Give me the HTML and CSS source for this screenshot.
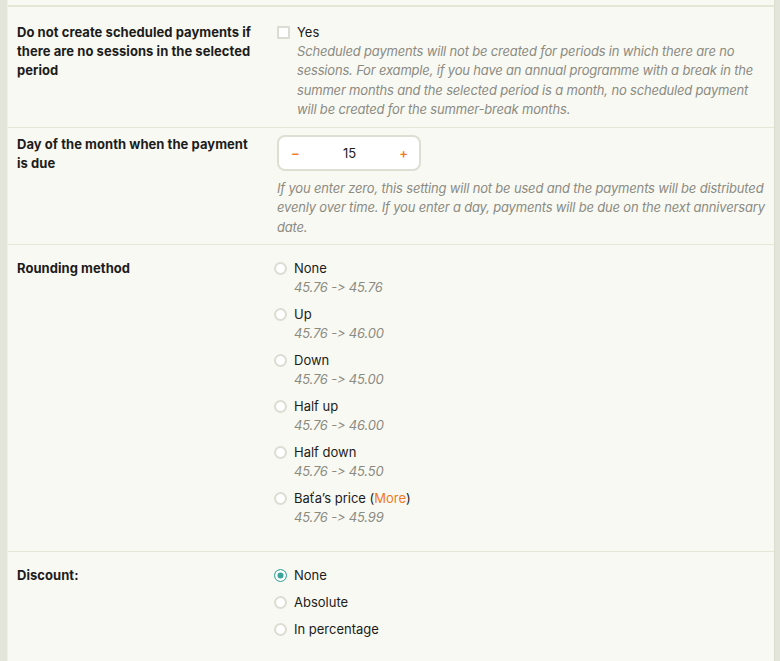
FILE: index.html
```html
<!DOCTYPE html>
<html lang="en">
<head>
<meta charset="utf-8">
<title>Payment settings</title>
<link rel="stylesheet" href="styles.css">
</head>
<body>
<div class="page">
  <div class="panel">
    <div class="top-edge"></div>

    <div class="row row-first">
      <div class="label">Do not create scheduled payments if there are no sessions in the selected period</div>
      <div class="field">
        <label class="check">
          <span class="box"></span>
          <span class="check-text">Yes</span>
        </label>
        <p class="help indent">Scheduled payments will not be created for periods in which there are no sessions. For example, if you have an annual programme with a break in the summer months and the selected period is a month, no scheduled payment will be created for the summer-break months.</p>
      </div>
    </div>

    <div class="row row-day">
      <div class="label">Day of the month when the payment is due</div>
      <div class="field">
        <div class="stepper">
          <span class="step minus">&minus;</span>
          <span class="value">15</span>
          <span class="step">+</span>
        </div>
        <p class="help">If you enter zero, this setting will not be used and the payments will be distributed evenly over time. If you enter a day, payments will be due on the next anniversary date.</p>
      </div>
    </div>

    <div class="row row-round">
      <div class="label">Rounding method</div>
      <div class="field">
        <div class="options">
          <div class="opt">
            <span class="radio"></span>
            <div><div class="opt-text">None</div><div class="sub">45.76 -&gt; 45.76</div></div>
          </div>
          <div class="opt">
            <span class="radio"></span>
            <div><div class="opt-text">Up</div><div class="sub">45.76 -&gt; 46.00</div></div>
          </div>
          <div class="opt">
            <span class="radio"></span>
            <div><div class="opt-text">Down</div><div class="sub">45.76 -&gt; 45.00</div></div>
          </div>
          <div class="opt">
            <span class="radio"></span>
            <div><div class="opt-text">Half up</div><div class="sub">45.76 -&gt; 46.00</div></div>
          </div>
          <div class="opt">
            <span class="radio"></span>
            <div><div class="opt-text">Half down</div><div class="sub">45.76 -&gt; 45.50</div></div>
          </div>
          <div class="opt">
            <span class="radio"></span>
            <div><div class="opt-text">Baťa’s price (<a class="more" href="#">More</a>)</div><div class="sub">45.76 -&gt; 45.99</div></div>
          </div>
        </div>
      </div>
    </div>

    <div class="row row-discount">
      <div class="label">Discount:</div>
      <div class="field">
        <div class="options compact">
          <div class="opt"><span class="radio on"></span><div class="opt-text">None</div></div>
          <div class="opt"><span class="radio"></span><div class="opt-text">Absolute</div></div>
          <div class="opt"><span class="radio"></span><div class="opt-text">In percentage</div></div>
        </div>
      </div>
    </div>
  </div>
</div>
</body>
</html>
```

FILE: styles.css
```css
html, body {
  margin: 0;
  padding: 0;
  height: 100%;
}
body {
  background: #e4e5da;
  font-family: "Inter", "Noto Sans", sans-serif;
  font-size: 13px;
  color: #1c1c1a;
  overflow: hidden;
  font-variant-ligatures: none;
  font-feature-settings: "calt" 0, "liga" 0;
}
.page {
  padding: 0 5px 0 7px;
  height: 100%;
}
.panel {
  background: #f9f9f4;
  border-left: 1px solid #eef0e4;
  border-right: 1px solid #dcdecf;
  height: 100%;
}
.top-edge {
  height: 5px;
  border-bottom: 2px solid #e4e6d6;
}
.row {
  display: grid;
  grid-template-columns: 260px 1fr;
  padding: 13px 5px 8px 9px;
  border-bottom: 1px solid #e4e6d6;
}
.row-first { padding-top: 16px; padding-bottom: 8px; }
.row-day { padding-top: 7px; padding-bottom: 7px; }
.row-round { padding-top: 14px; padding-bottom: 24px; }
.row-discount { padding-top: 14px; border-bottom: none; }
.label {
  font-weight: 700;
  line-height: 19px;
  padding-right: 16px;
  letter-spacing: 0.05px;
}
.field {
  line-height: 19px;
}
.check {
  display: flex;
  align-items: center;
  gap: 7px;
}
.box {
  width: 13px;
  height: 13px;
  box-sizing: border-box;
  border: 2px solid #dcdcd2;
  background: #fff;
  border-radius: 1px;
}
.help {
  margin: 0;
  color: #8b8b82;
  font-style: italic;
  line-height: 19.3px;
  letter-spacing: -0.18px;
}
.help.indent {
  margin-left: 20px;
}
.stepper {
  height: 32px;
  width: 117px;
  border: 2px solid #dedfd3;
  border-radius: 8px;
  background: #fff;
  display: flex;
  align-items: center;
  justify-content: space-between;
  padding: 0 11px 0 12px;
  box-sizing: content-box;
  margin-bottom: 8px;
}
.step {
  color: #f07a1c;
  font-weight: 600;
  font-size: 13px;
}
.value {
  color: #1c1c1a;
}
.options {
  display: flex;
  flex-direction: column;
  gap: 8px;
  margin-left: -3px;
}
.options.compact { gap: 8px; }
.opt {
  display: flex;
  align-items: flex-start;
  gap: 7px;
}
.radio {
  width: 13px;
  height: 13px;
  box-sizing: border-box;
  border: 2px solid #dcdcd2;
  border-radius: 50%;
  background: #fff;
  margin-top: 3px;
  flex: none;
}
.radio.on {
  background: #3aa39a;
  border: 1.5px solid #48aaa2;
  box-shadow: inset 0 0 0 2.5px #fff;
}
.opt-text {
  line-height: 19px;
}
.sub {
  color: #8b8b82;
  font-style: italic;
  line-height: 19px;
  letter-spacing: -0.2px;
}
.more {
  color: #f07a1c;
  text-decoration: none;
}
```
